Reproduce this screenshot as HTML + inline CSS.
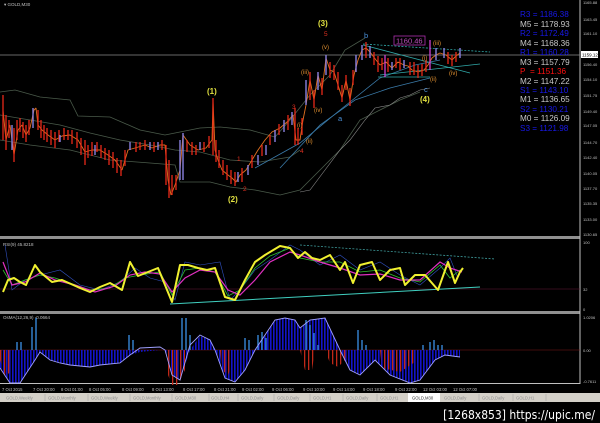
<!DOCTYPE html>
<html><head><meta charset="utf-8"><style>
html,body{margin:0;padding:0;background:#000;width:600px;height:423px;overflow:hidden;font-family:"Liberation Sans",sans-serif}
svg{position:absolute;left:0;top:0}
</style></head><body>
<svg width="600" height="423" viewBox="0 0 600 423" xmlns="http://www.w3.org/2000/svg" font-family="Liberation Sans, sans-serif">
<defs>
<pattern id="bst" width="3" height="4" patternUnits="userSpaceOnUse"><rect x="0" y="0" width="1.6" height="4" fill="#1414c8"/></pattern>
<pattern id="rst" width="4" height="4" patternUnits="userSpaceOnUse"><rect x="0" y="0" width="1.3" height="4" fill="#c02818"/></pattern>
</defs>
<rect width="600" height="423" fill="#000"/>
<rect x="0" y="236" width="580" height="3" fill="#909090"/>
<rect x="0" y="311" width="580" height="3" fill="#909090"/>
<line x1="580" y1="0" x2="580" y2="384" stroke="#c0c0c0" stroke-width="1"/>
<line x1="0" y1="383.5" x2="580" y2="383.5" stroke="#c0c0c0"/>
<text x="4" y="6" font-size="4.5" fill="#c0c0c0">▾ GOLD,M30</text>
<line x1="0" y1="55" x2="580" y2="55" stroke="#8a8a8a" stroke-width="0.8"/>
<polyline fill="none" stroke="#4a5a4a" stroke-width="0.8" points="0,92 15,90 40,97 70,100 78,116 110,117 140,130 165,135 175,133 200,128 220,127 250,130 275,137 290,120 310,95 330,75 345,50 365,38"/>
<polyline fill="none" stroke="#4a5a4a" stroke-width="0.8" points="0,115 30,120 60,125 90,133 120,140 150,145 175,150 200,152 230,160 260,162 290,157 300,150"/>
<polyline fill="none" stroke="#4a5a4a" stroke-width="0.8" points="0,140 30,145 70,150 110,160 150,163 175,165 180,182 210,182 230,187 255,190 280,195 300,190 310,180 340,150 360,120 380,110 400,100 420,92"/>
<polyline fill="none" stroke="#8a8a8a" stroke-width="0.6" points="300,192 310,190 325,170 340,150 350,140 365,120 375,108 390,105 400,98 410,95 420,90 430,88"/>
<polyline fill="none" stroke="#3a7aa8" stroke-width="0.8" points="255,168 300,143 340,110 380,78 415,65 440,60"/>
<polyline fill="none" stroke="#3a7aa8" stroke-width="0.8" points="280,168 320,125 355,100 390,88 430,78"/>
<line x1="363" y1="45" x2="470" y2="73" stroke="#30a8a8" stroke-width="0.8"/>
<line x1="363" y1="44" x2="490" y2="52" stroke="#30a8a8" stroke-width="0.8" stroke-dasharray="2,1.5"/>
<line x1="380" y1="75" x2="480" y2="64" stroke="#30a8a8" stroke-width="0.8"/>
<line x1="378" y1="77" x2="430" y2="77" stroke="#30a8a8" stroke-width="0.8"/>
<!-- close line -->
<polyline fill="none" stroke="#e07020" stroke-width="0.9" stroke-linejoin="bevel" points="3,110 6,140 10,125 14,155 18,130 22,125 26,135 30,128 34,110 36,108 38,125 42,130 48,135 55,140 62,136 70,135 78,140 85,152 92,150 100,150 108,155 115,160 122,170 128,150 135,148 145,145 152,148 160,145 165,145 168,180 171,195 175,185 180,170 183,135 190,145 198,150 206,148 212,140 213,100 215,150 218,160 222,170 228,175 232,178 236,182 240,175 246,170 252,160 258,150 265,140 272,132 280,128 287,122 293,115 296,140 300,140 303,120 306,105 310,80 314,100 318,75 322,90 326,58 330,70 334,72 338,85 342,98 346,80 350,100 354,75 358,60 362,50 366,48 370,52 376,60 380,65 386,62 392,68 398,62 404,65 408,66 412,70 418,72 424,70 428,65 432,58 436,55 440,53 446,55 452,60 456,56 460,53"/>
<!-- red bars -->
<path fill="none" stroke="#e82818" stroke-width="1.3" d="M3 95V140M6 115V150M9 120V138M14 128V162M17 120V140M20 118V132M23 122V138M26 125V142M29 120V135M38 110V130M41 120V138M44 125V140M47 128V142M51 130V145M55 132V148M59 130V142M64 128V140M68 130V140M72 130V144M77 132V148M81 138V155M85 140V165M88 145V158M92 142V156M97 142V152M101 145V158M105 148V160M109 150V165M113 152V168M117 158V173M121 160V176M125 150V166M136 142V152M140 142V150M145 140V150M154 142V152M162 140V150M166 145V185M169 160V198M172 175V195M176 175V190M187 140V152M192 142V155M196 145V155M204 142V152M209 136V148M213 98V155M216 140V162M219 150V168M223 160V175M227 165V180M231 170V184M235 172V186M242 168V182M252 155V168M262 145V156M270 135V145M279 124V135M288 115V130M295 108V145M298 128V145M302 118V135M310 72V100M314 90V108M322 78V95M330 62V78M334 65V80M338 72V90M342 85V102M346 75V90M350 88V106M353 70V85M366 42V58M374 52V65M378 56V72M382 58V70M388 58V72M396 58V68M400 58V70M410 62V75M414 62V75M418 65V78M422 64V76M426 60V72M448 52V64M452 55V66M456 52V62"/>
<g stroke="#8a80e0" stroke-width="1.4">
<line x1="12" y1="125" x2="12" y2="150"/><line x1="33" y1="108" x2="33" y2="128"/><line x1="60" y1="135" x2="60" y2="142"/><line x1="95" y1="145" x2="95" y2="155"/><line x1="130" y1="142" x2="130" y2="150"/><line x1="150" y1="142" x2="150" y2="150"/><line x1="158" y1="142" x2="158" y2="150"/><line x1="180" y1="140" x2="180" y2="180"/><line x1="183" y1="133" x2="183" y2="180"/><line x1="200" y1="142" x2="200" y2="150"/><line x1="238" y1="172" x2="238" y2="182"/><line x1="248" y1="165" x2="248" y2="175"/><line x1="258" y1="155" x2="258" y2="165"/><line x1="266" y1="145" x2="266" y2="155"/><line x1="275" y1="130" x2="275" y2="142"/><line x1="284" y1="120" x2="284" y2="132"/><line x1="292" y1="112" x2="292" y2="125"/><line x1="306" y1="80" x2="306" y2="105"/><line x1="318" y1="72" x2="318" y2="90"/><line x1="326" y1="55" x2="326" y2="75"/><line x1="356" y1="55" x2="356" y2="72"/><line x1="362" y1="45" x2="362" y2="60"/><line x1="370" y1="46" x2="370" y2="58"/><line x1="392" y1="62" x2="392" y2="70"/><line x1="404" y1="60" x2="404" y2="68"/><line x1="436" y1="48" x2="436" y2="60"/><line x1="444" y1="48" x2="444" y2="58"/><line x1="460" y1="48" x2="460" y2="58"/>
</g>
<g stroke="#d040d0" stroke-width="1.3"><line x1="385" y1="55" x2="385" y2="77"/><line x1="430" y1="40" x2="430" y2="70"/></g>
<rect x="394" y="36" width="31" height="9" fill="none" stroke="#b030b0" stroke-width="0.8"/>
<text x="396" y="43.5" font-size="7.5" fill="#c050c0">1160.46</text>
<g font-size="8" font-weight="bold" fill="#e0e040">
<text x="207" y="94">(1)</text><text x="228" y="202">(2)</text><text x="318" y="26">(3)</text><text x="420" y="102">(4)</text></g>
<g font-size="6.5" fill="#e03020"><text x="292" y="109">3</text><text x="243" y="191">2</text><text x="237" y="161">1</text><text x="324" y="36">5</text><text x="300" y="153">4</text></g>
<g font-size="6" fill="#e09030"><text x="322" y="49">(v)</text><text x="301" y="74">(iii)</text><text x="314" y="112">(iv)</text><text x="306" y="143">(ii)</text><text x="297" y="127">(i)</text><text x="433" y="45">(iii)</text><text x="422" y="60">(i)</text><text x="449" y="75">(iv)</text><text x="430" y="81">(ii)</text></g>
<g font-size="7.5" fill="#4a90d8"><text x="364" y="38">b</text><text x="338" y="121">a</text><text x="424" y="92">c</text></g>
<g font-size="8.2">
<text x="520" y="17" fill="#1818e8">R3 = 1186.38</text>
<text x="520" y="27" fill="#c8c8c8">M5 = 1178.93</text>
<text x="520" y="36" fill="#1818e8">R2 = 1172.49</text>
<text x="520" y="46" fill="#c8c8c8">M4 = 1168.36</text>
<text x="520" y="55" fill="#1818e8">R1 = 1160.28</text>
<text x="520" y="65" fill="#c8c8c8">M3 = 1157.79</text>
<text x="520" y="74" fill="#ff1010">P&#160;&#160;= 1151.36</text>
<text x="520" y="84" fill="#c8c8c8">M2 = 1147.22</text>
<text x="520" y="93" fill="#1818e8">S1 = 1143.10</text>
<text x="520" y="102" fill="#c8c8c8">M1 = 1136.65</text>
<text x="520" y="112" fill="#1818e8">S2 = 1130.21</text>
<text x="520" y="121" fill="#c8c8c8">M0 = 1126.09</text>
<text x="520" y="131" fill="#1818e8">S3 = 1121.98</text>
</g>
<g font-size="4" fill="#c0c0c0">
<text x="583" y="4">1165.88</text><text x="583" y="21">1163.45</text><text x="583" y="35">1161.10</text><text x="583" y="66">1156.40</text><text x="583" y="81">1154.10</text><text x="583" y="97">1151.75</text><text x="583" y="113">1149.40</text><text x="583" y="127">1147.05</text><text x="583" y="144">1144.70</text><text x="583" y="159">1142.40</text><text x="583" y="175">1140.05</text><text x="583" y="190">1137.70</text><text x="583" y="205">1135.35</text><text x="583" y="221">1133.00</text><text x="583" y="236">1130.65</text>
<text x="583" y="244">100</text><text x="583" y="291">32</text><text x="583" y="311">0</text>
<text x="583" y="319">1.0206</text><text x="583" y="352">0.00</text><text x="583" y="383">-0.7611</text>
</g>
<rect x="581" y="51" width="17" height="7" fill="#fff"/><text x="582" y="56.5" font-size="4.5" fill="#000">1159.12</text>
<text x="3" y="246" font-size="4.5" fill="#c0c0c0">RSI(9) 45.8218</text>
<line x1="0" y1="289" x2="580" y2="289" stroke="#6a1a3a" stroke-width="0.6"/>
<line x1="170" y1="304" x2="480" y2="287" stroke="#40d0c0" stroke-width="1"/>
<line x1="300" y1="245" x2="495" y2="259" stroke="#40a0a0" stroke-width="0.8" stroke-dasharray="2,1.5"/>
<polyline fill="none" stroke="#3050c0" stroke-width="0.6" points="5,245 12,290 25,280 40,275 60,270 80,285 100,290 120,282 135,268 150,278 165,282 175,300 185,262 200,265 220,262 230,300 240,290 255,270 270,260 290,245 300,250 320,265 340,255 360,270 380,262 400,275 420,285 440,268 450,258 458,278"/>
<polyline fill="none" stroke="#30c030" stroke-width="0.8" points="3,270 12,285 25,280 40,275 55,278 70,283 90,290 110,288 125,278 140,275 160,272 172,295 185,270 200,268 215,272 228,296 240,290 255,268 270,256 290,248 300,258 320,262 340,262 360,272 380,270 400,278 420,282 440,265 450,278 460,270"/>
<polyline fill="none" stroke="#e030c0" stroke-width="1.2" points="3,262 12,285 25,282 40,273 55,280 75,285 95,292 115,286 130,275 145,272 160,274 172,292 185,278 200,270 215,272 228,290 240,295 255,280 270,262 290,252 300,255 320,262 340,268 360,275 380,274 400,280 420,280 440,262 450,268 462,272"/>
<polyline fill="none" stroke="#f0f030" stroke-width="2" stroke-linejoin="round" points="3,292 8,280 14,278 20,282 26,285 35,265 40,272 52,282 62,280 80,288 90,292 100,287 110,283 122,290 130,262 138,276 148,272 158,268 165,285 172,302 180,265 188,265 198,268 207,270 215,268 225,297 235,300 245,280 255,262 265,255 280,246 290,248 298,258 305,252 312,258 320,260 330,255 340,270 345,262 353,283 360,265 372,262 380,280 390,270 400,268 405,285 415,275 425,275 438,290 448,262 455,283 460,272 463,268"/>
<text x="3" y="319" font-size="4.5" fill="#c0c0c0">OsMA(12,26,9) -0.0664</text>
<line x1="0" y1="350" x2="580" y2="350" stroke="#801818" stroke-width="0.6"/>
<polygon fill="url(#bst)" points="0,350 0,368 10,383 20,383 35,360 40,352 50,360 60,363 70,365 90,367 100,365 120,363 130,355 140,352 160,350 165,350 172,375 180,380 190,350 200,336 210,340 215,350 225,378 235,382 245,370 255,350 265,336 275,320 285,318 295,320 300,328 310,320 325,318 340,350 350,370 360,375 375,360 390,375 410,383 420,380 435,360 445,355 460,357 460,350"/>
<polygon fill="url(#rst)" points="0,350 0,360 5,375 12,372 12,350"/>
<polygon fill="url(#rst)" points="165,350 168,375 172,385 178,385 185,370 185,350"/>
<polygon fill="url(#rst)" points="220,350 222,370 228,375 232,365 232,350"/>
<polygon fill="url(#rst)" points="325,350 330,363 338,367 345,360 348,350"/>
<polygon fill="url(#rst)" points="300,350 305,370 312,370 315,350"/>
<polygon fill="url(#rst)" points="380,350 382,368 400,372 415,362 415,350"/>
<g stroke="#3a90e8" stroke-width="1.3">
<line x1="32" y1="350" x2="32" y2="327"/><line x1="36" y1="350" x2="36" y2="318"/><line x1="17" y1="350" x2="17" y2="342"/><line x1="21" y1="350" x2="21" y2="342"/><line x1="129" y1="350" x2="129" y2="335"/><line x1="133" y1="350" x2="133" y2="340"/><line x1="182" y1="350" x2="182" y2="318"/><line x1="186" y1="350" x2="186" y2="318"/><line x1="190" y1="350" x2="190" y2="335"/><line x1="245" y1="350" x2="245" y2="338"/><line x1="249" y1="350" x2="249" y2="340"/><line x1="258" y1="350" x2="258" y2="335"/><line x1="262" y1="350" x2="262" y2="332"/><line x1="266" y1="350" x2="266" y2="338"/><line x1="306" y1="350" x2="306" y2="320"/><line x1="310" y1="350" x2="310" y2="325"/><line x1="314" y1="350" x2="314" y2="333"/><line x1="318" y1="350" x2="318" y2="345"/><line x1="358" y1="350" x2="358" y2="330"/><line x1="362" y1="350" x2="362" y2="340"/><line x1="366" y1="350" x2="366" y2="345"/><line x1="423" y1="350" x2="423" y2="345"/><line x1="430" y1="350" x2="430" y2="342"/><line x1="434" y1="350" x2="434" y2="340"/><line x1="438" y1="350" x2="438" y2="345"/><line x1="442" y1="350" x2="442" y2="345"/>
</g>
<polyline fill="none" stroke="#a0a0ff" stroke-width="0.9" points="0,368 10,383 20,383 35,360 40,352 50,360 60,363 70,365 90,367 100,365 120,363 130,355 140,348 160,347 165,350 172,375 180,380 190,345 200,335 210,340 215,350 225,378 235,382 245,370 255,350 265,335 275,320 285,318 295,320 300,328 310,320 325,318 340,350 350,370 360,375 375,360 390,375 410,383 420,380 435,360 445,355 460,357"/>
<g font-size="4.2" fill="#c0c0c0">
<text x="2" y="391">7 Oct 2015</text><text x="33" y="391">7 Oct 20:00</text><text x="61" y="391">8 Oct 01:00</text><text x="89" y="391">8 Oct 05:00</text><text x="122" y="391">8 Oct 09:00</text><text x="152" y="391">8 Oct 13:00</text><text x="183" y="391">8 Oct 17:00</text><text x="214" y="391">8 Oct 21:00</text><text x="242" y="391">9 Oct 02:00</text><text x="272" y="391">9 Oct 06:00</text><text x="303" y="391">9 Oct 10:00</text><text x="333" y="391">9 Oct 14:00</text><text x="363" y="391">9 Oct 18:00</text><text x="395" y="391">9 Oct 22:00</text><text x="423" y="391">12 Oct 03:00</text><text x="453" y="391">12 Oct 07:00</text>
</g>
<rect x="0" y="393" width="600" height="9" fill="#d4d0c8"/>
<rect x="408" y="393" width="32" height="9" fill="#ffffff"/>
<g font-size="4.2" fill="#909090">
<text x="6" y="399.5">GOLD,Weekly</text><text x="48" y="399.5">GOLD,Monthly</text><text x="91" y="399.5">GOLD,Weekly</text><text x="133" y="399.5">GOLD,Monthly</text><text x="175" y="399.5">GOLD,M30</text><text x="211" y="399.5">GOLD,H4</text><text x="241" y="399.5">GOLD,Daily</text><text x="277" y="399.5">GOLD,Daily</text><text x="313" y="399.5">GOLD,H1</text><text x="346" y="399.5">GOLD,Daily</text><text x="380" y="399.5">GOLD,H1</text><text x="412" y="399.5" fill="#303030">GOLD,M30</text><text x="444" y="399.5">GOLD,Daily</text><text x="482" y="399.5">GOLD,Daily</text><text x="516" y="399.5">GOLD,H1</text>
</g>
<g stroke="#a0a0a0" stroke-width="0.5"><line x1="45" y1="394" x2="45" y2="401"/><line x1="88" y1="394" x2="88" y2="401"/><line x1="130" y1="394" x2="130" y2="401"/><line x1="172" y1="394" x2="172" y2="401"/><line x1="209" y1="394" x2="209" y2="401"/><line x1="238" y1="394" x2="238" y2="401"/><line x1="274" y1="394" x2="274" y2="401"/><line x1="310" y1="394" x2="310" y2="401"/><line x1="343" y1="394" x2="343" y2="401"/><line x1="377" y1="394" x2="377" y2="401"/><line x1="479" y1="394" x2="479" y2="401"/><line x1="513" y1="394" x2="513" y2="401"/><line x1="546" y1="394" x2="546" y2="401"/></g>
<text x="595" y="419" font-size="12" fill="#ffffff" text-anchor="end" font-family="DejaVu Sans Condensed, DejaVu Sans, sans-serif">[1268x853] https://upic.me/</text>
</svg>
</body></html>
